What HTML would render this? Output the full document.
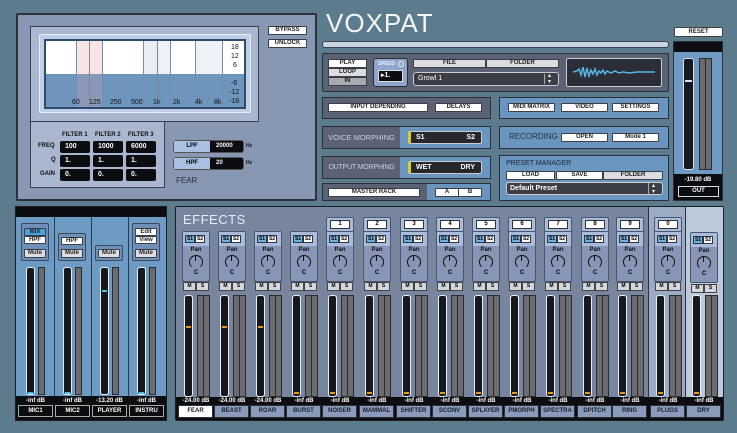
<!DOCTYPE html>
<html><head><meta charset="utf-8"><style>
*{box-sizing:border-box;margin:0;padding:0;white-space:nowrap}
body{width:737px;height:433px;background:#5c7b8d;position:relative;overflow:hidden;font-family:"Liberation Sans",sans-serif;}
.a{position:absolute}
.b{position:absolute;background:#fff;border:1px solid #3a3f4a;font-size:6px;font-weight:bold;color:#222;text-align:center;line-height:7px;border-radius:1px}
.g{background:#dcdde0}
.blk{position:absolute;background:#0c0d10;color:#fff;font-size:7px;font-weight:bold;line-height:11px;padding-left:5px;border-radius:2px}
.t{position:absolute;font-size:6px;font-weight:bold;color:#111}
.ch{position:absolute;top:207px;width:36px;height:213px}
.num{position:absolute;left:4px;top:10px;width:28px;height:22px;background:#a9bcdb;border:1px solid #4a5670;border-radius:2px}
.num i{position:absolute;left:3px;top:2px;width:20px;height:9px;background:#fff;border:1px solid #333;font-style:normal;font-size:6px;font-weight:bold;text-align:center;line-height:7px}
.grp{position:absolute;left:4px;top:24px;width:28px;height:51px;background:#8796b6;border:1px solid #4a5670;border-radius:2px}
.grp .ss{position:absolute;left:0;top:0;width:26px;height:14px;background:#a9bcdb}
.s1,.s2{position:absolute;top:3px;width:10px;height:8px;font-size:5px;font-weight:bold;text-align:center;line-height:7px;border:1px solid #334}
.s1{left:2px;background:#6eb0e0}.s2{left:12px;background:#fff}
.pan{position:absolute;left:0;top:15px;width:26px;text-align:center;font-size:6px;font-weight:bold;color:#111}
.kn{position:absolute;left:6px;top:23px;width:14px;height:14px;border:1.5px solid #111;border-radius:50%;border-bottom-color:transparent}
.kn:after{content:"";position:absolute;left:4.5px;top:-1px;width:1.5px;height:6px;background:#111}
.cc{position:absolute;left:0;top:38px;width:26px;text-align:center;font-size:6px;font-weight:bold}
.ms{position:absolute;top:75px;width:13px;height:9px;background:#d3d6dc;border:1px solid #444;font-size:5px;font-weight:bold;text-align:center;line-height:7px}
.fd{position:absolute;left:6px;top:88px;width:9px;height:102px;background:#15181c;border:1px solid #e8eef5;border-radius:3px}
.fd b{position:absolute;left:1px;width:5px;height:2px;background:#e89a1a}
.m{position:absolute;top:88px;width:7px;height:102px;background:#6a6c70;border:1px solid #2a2c30}
.db{position:absolute;top:191px;width:36px;text-align:center;font-size:6px;font-weight:bold;color:#fff}
.lb{position:absolute;top:198px;left:0;width:35px;height:13px;background:#8a9abb;border:1px solid #2a2f3a;font-size:6px;font-weight:bold;text-align:center;line-height:11px;color:#1a1f2a}
.mc{position:absolute;top:207px;width:37px;height:213px}
.mf{position:absolute;left:9px;top:60px;width:9px;height:128px;background:#15181c;border:1px solid #e8eef5;border-radius:3px}
.mf b{position:absolute;left:1px;width:5px;height:2px;background:#49c6e8}
.mm{position:absolute;left:21px;top:60px;width:7px;height:128px;background:#6a6c70;border:1px solid #2a2c30}
.ml{position:absolute;top:198px;left:1px;width:35px;height:12px;background:#0c0d10;border:1px solid #aaa;color:#fff;font-size:6px;font-weight:bold;text-align:center;line-height:10px}
.mdb{position:absolute;top:191px;width:37px;text-align:center;font-size:6px;font-weight:bold;color:#fff}
.mg{position:absolute;left:4px;width:28px;background:#6d8fb8;border:1px solid #3a4a60;border-radius:2px}
</style></head><body>

<div class="a" style="left:16px;top:13px;width:301px;height:188px;background:#8898b4;border:2px solid #2a303c;border-radius:2px"></div>
<div class="a" style="left:30px;top:26px;width:229px;height:96px;background:#a9b7d0;border:1px solid #3a4050"></div>
<div class="a" style="left:39px;top:34px;width:212px;height:79px;background:#c0cfe5;border:1px solid #e6eef8;border-radius:2px"></div>
<div class="a" style="left:44px;top:39px;width:202px;height:70px;background:#fff;border:2px solid #2d4b6e"></div>
<div class="a" style="left:46px;top:74px;width:198px;height:33px;background:#6e96bd"></div>
<div class="a" style="left:77px;top:41px;width:12px;height:33px;background:#f8e4e4"></div>
<div class="a" style="left:90px;top:41px;width:12px;height:33px;background:#f8e4e4"></div>
<div class="a" style="left:77px;top:74px;width:25px;height:33px;background:#8898b8"></div>
<div class="a" style="left:144px;top:41px;width:14px;height:33px;background:#e8edf6"></div>
<div class="a" style="left:158px;top:41px;width:12px;height:33px;background:#eef1f8"></div>
<div class="a" style="left:196px;top:41px;width:26px;height:33px;background:#eef1f8"></div>
<div class="a" style="left:76px;top:41px;width:1px;height:66px;background:#7a8ab8"></div>
<div class="a" style="left:89px;top:41px;width:1px;height:66px;background:#888"></div>
<div class="a" style="left:102px;top:41px;width:1px;height:66px;background:#7a8ab8"></div>
<div class="a" style="left:143px;top:41px;width:1px;height:66px;background:#7a8ab8"></div>
<div class="a" style="left:157px;top:41px;width:1px;height:66px;background:#888"></div>
<div class="a" style="left:170px;top:41px;width:1px;height:66px;background:#7a8ab8"></div>
<div class="a" style="left:195px;top:41px;width:1px;height:66px;background:#7a8ab8"></div>
<div class="a" style="left:222px;top:41px;width:1px;height:66px;background:#7a8ab8"></div>
<div class="t" style="left:72px;top:99px;font-weight:normal;font-size:7px">60</div>
<div class="t" style="left:89px;top:99px;font-weight:normal;font-size:7px">125</div>
<div class="t" style="left:110px;top:99px;font-weight:normal;font-size:7px">250</div>
<div class="t" style="left:131px;top:99px;font-weight:normal;font-size:7px">500</div>
<div class="t" style="left:153px;top:99px;font-weight:normal;font-size:7px">1k</div>
<div class="t" style="left:173px;top:99px;font-weight:normal;font-size:7px">2k</div>
<div class="t" style="left:195px;top:99px;font-weight:normal;font-size:7px">4k</div>
<div class="t" style="left:214px;top:99px;font-weight:normal;font-size:7px">8k</div>
<div class="t" style="left:231px;top:44px;font-weight:normal;font-size:7px">18</div>
<div class="t" style="left:231px;top:53px;font-weight:normal;font-size:7px">12</div>
<div class="t" style="left:233px;top:62px;font-weight:normal;font-size:7px">6</div>
<div class="t" style="left:231px;top:80px;font-weight:normal;font-size:7px">-6</div>
<div class="t" style="left:229px;top:89px;font-weight:normal;font-size:7px">-12</div>
<div class="t" style="left:229px;top:98px;font-weight:normal;font-size:7px">-18</div>

<div class="a" style="left:30px;top:121px;width:135px;height:67px;background:#a9b7d0;border:1px solid #3a4050"></div>
<div class="t" style="left:62px;top:132px">FILTER 1</div>
<div class="t" style="left:95px;top:132px">FILTER 2</div>
<div class="t" style="left:128px;top:132px">FILTER 3</div>
<div class="t" style="left:38px;top:143px">FREQ</div>
<div class="t" style="left:51px;top:157px">Q</div>
<div class="t" style="left:40px;top:171px">GAIN</div>
<div class="blk" style="left:60px;top:141px;width:30px;height:12px">100</div>
<div class="blk" style="left:93px;top:141px;width:30px;height:12px">1000</div>
<div class="blk" style="left:126px;top:141px;width:30px;height:12px">6000</div>
<div class="blk" style="left:60px;top:155px;width:30px;height:12px">1.</div>
<div class="blk" style="left:93px;top:155px;width:30px;height:12px">1.</div>
<div class="blk" style="left:126px;top:155px;width:30px;height:12px">1.</div>
<div class="blk" style="left:60px;top:169px;width:30px;height:12px">0.</div>
<div class="blk" style="left:93px;top:169px;width:30px;height:12px">0.</div>
<div class="blk" style="left:126px;top:169px;width:30px;height:12px">0.</div>

<div class="a" style="left:173px;top:140px;width:71px;height:13px;background:#0c0d10;border:1px solid #555;border-radius:3px"></div>
<div class="a" style="left:174px;top:141px;width:36px;height:11px;background:#a9c0e2;font-size:6px;font-weight:bold;text-align:center;line-height:11px">LPF</div>
<div class="t" style="left:216px;top:143px;color:#fff">20000</div>
<div class="t" style="left:246px;top:143px;font-size:5px">Hz</div>
<div class="a" style="left:173px;top:157px;width:71px;height:13px;background:#0c0d10;border:1px solid #555;border-radius:3px"></div>
<div class="a" style="left:174px;top:158px;width:36px;height:11px;background:#a9c0e2;font-size:6px;font-weight:bold;text-align:center;line-height:11px">HPF</div>
<div class="t" style="left:216px;top:160px;color:#fff">20</div>
<div class="t" style="left:246px;top:160px;font-size:5px">Hz</div>
<div class="a" style="left:176px;top:176px;font-size:8px;color:#2a3040">FEAR</div>

<div class="b" style="left:268px;top:26px;width:39px;height:9px">BYPASS</div>
<div class="b" style="left:268px;top:39px;width:39px;height:9px">UNLOCK</div>

<div class="a" style="left:326px;top:8px;font-size:26px;color:#f4f6f8;letter-spacing:1px;line-height:30px">VOXPAT</div>
<div class="a" style="left:322px;top:41px;width:347px;height:7px;background:#c8d3e2;border:1px solid #3a4050;border-radius:3px"></div>

<div class="a" style="left:322px;top:53px;width:347px;height:39px;background:#5b6274;border:1px solid #2a2f3a;border-radius:2px"></div>
<div class="b" style="left:328px;top:59px;width:39px;height:9px">PLAY</div>
<div class="b g" style="left:328px;top:68px;width:39px;height:9px">LOOP</div>
<div class="b" style="left:328px;top:77px;width:39px;height:9px;background:#a8aab0">IN</div>
<div class="a" style="left:373px;top:58px;width:35px;height:29px;background:#8ea6cc;border:1px solid #2a2f3a;border-radius:3px"></div>
<div class="t" style="left:378px;top:61px;font-size:5px;color:#e8eef8">SPEED</div>
<div class="a" style="left:398px;top:61px;width:6px;height:6px;border:1px solid #eee;border-radius:50%"></div>
<div class="a" style="left:378px;top:70px;width:25px;height:12px;background:#0c0d10;border:1px solid #ddd;color:#fff;font-size:7px;font-weight:bold;line-height:10px;padding-left:2px">▸1.</div>
<div class="b g" style="left:413px;top:59px;width:73px;height:9px">FILE</div>
<div class="b g" style="left:486px;top:59px;width:73px;height:9px">FOLDER</div>
<div class="a" style="left:413px;top:72px;width:146px;height:14px;background:#3b3e46;border:1px solid #ccc;border-radius:3px;color:#fff;font-size:7px;line-height:12px;padding-left:4px">Growl 1</div>
<div class="a" style="left:544px;top:74px;width:1px;height:10px;background:#aaa"></div>
<div class="a" style="left:548px;top:73px;color:#fff;font-size:6px;line-height:6px;white-space:normal">▴<br>▾</div>
<div class="a" style="left:566px;top:58px;width:96px;height:29px;background:#2b2e36;border:1px solid #c8ccd4;border-radius:2px"></div>
<svg class="a" style="left:567px;top:59px" width="94" height="27"><path d="M6 13 L10 12 L12 10 L14 16 L16 8 L18 18 L20 9 L22 17 L24 11 L26 15 L28 10 L30 16 L32 12 L34 14 L36 11 L38 15 L40 12 L44 14 L48 12 L52 14 L56 13 L62 14 L70 13 L80 13 L88 13" stroke="#5ab4e8" stroke-width="1.5" fill="none"/></svg>

<div class="a" style="left:322px;top:97px;width:169px;height:22px;background:#5b6274;border:1px solid #2a2f3a"></div>
<div class="b" style="left:328px;top:103px;width:100px;height:9px">INPUT DEPENDING</div>
<div class="b" style="left:435px;top:103px;width:47px;height:9px">DELAYS</div>
<div class="a" style="left:499px;top:97px;width:170px;height:22px;background:#6a95be;border:1px solid #2a2f3a"></div>
<div class="b" style="left:508px;top:103px;width:47px;height:9px">MIDI MATRIX</div>
<div class="b" style="left:561px;top:103px;width:47px;height:9px">VIDEO</div>
<div class="b" style="left:612px;top:103px;width:47px;height:9px">SETTINGS</div>

<div class="a" style="left:322px;top:126px;width:169px;height:23px;background:#6a95be;border:1px solid #2a2f3a"></div>
<div class="a" style="left:323px;top:127px;width:77px;height:21px;background:#5b6274;color:#c8cfdc;font-size:7.5px;line-height:21px;text-align:center">VOICE MORPHING</div>
<div class="a" style="left:408px;top:131px;width:74px;height:13px;background:#25272c;border:1px solid #c8ccd4;border-left:3px solid #d8d020;border-radius:2px;color:#fff;font-size:7px;font-weight:bold;line-height:11px"><span style="position:absolute;left:5px">S1</span><span style="position:absolute;right:6px">S2</span></div>
<div class="a" style="left:499px;top:126px;width:170px;height:23px;background:#6a95be;border:1px solid #2a2f3a"></div>
<div class="a" style="left:509px;top:132px;color:#2a3040;font-size:8px">RECORDING</div>
<div class="b" style="left:561px;top:133px;width:47px;height:9px">OPEN</div>
<div class="b" style="left:612px;top:133px;width:47px;height:9px">Mode 1</div>

<div class="a" style="left:322px;top:156px;width:169px;height:23px;background:#6a95be;border:1px solid #2a2f3a"></div>
<div class="a" style="left:323px;top:157px;width:77px;height:21px;background:#5b6274;color:#c8cfdc;font-size:7px;line-height:21px;text-align:center;letter-spacing:-0.2px">OUTPUT MORPHING</div>
<div class="a" style="left:408px;top:161px;width:74px;height:13px;background:#25272c;border:1px solid #c8ccd4;border-left:3px solid #d8d020;border-radius:2px;color:#fff;font-size:7px;font-weight:bold;line-height:11px"><span style="position:absolute;left:5px">WET</span><span style="position:absolute;right:6px">DRY</span></div>
<div class="a" style="left:499px;top:155px;width:170px;height:46px;background:#6a95be;border:1px solid #2a2f3a"></div>
<div class="a" style="left:506px;top:160px;color:#1f2838;font-size:7px">PRESET MANAGER</div>
<div class="b" style="left:506px;top:171px;width:49px;height:9px">LOAD</div>
<div class="b" style="left:556px;top:171px;width:47px;height:9px">SAVE</div>
<div class="b g" style="left:603px;top:171px;width:60px;height:9px">FOLDER</div>
<div class="a" style="left:506px;top:182px;width:157px;height:13px;background:#3b3e46;border:1px solid #ccc;border-radius:3px;color:#fff;font-size:7px;font-weight:bold;line-height:11px;padding-left:3px">Default Preset</div>
<div class="a" style="left:648px;top:183px;width:1px;height:11px;background:#aaa"></div>
<div class="a" style="left:652px;top:183px;color:#fff;font-size:6px;line-height:6px;white-space:normal">▴<br>▾</div>

<div class="a" style="left:322px;top:183px;width:169px;height:18px;background:#6a95be;border:1px solid #2a2f3a"></div>
<div class="a" style="left:323px;top:184px;width:104px;height:16px;background:#5b6274"></div>
<div class="b" style="left:328px;top:188px;width:92px;height:9px">MASTER RACK</div>
<div class="b" style="left:435px;top:188px;width:24px;height:9px">A</div>
<div class="b" style="left:458px;top:188px;width:24px;height:9px">B</div>

<div class="b" style="left:674px;top:27px;width:49px;height:10px;line-height:8px">RESET</div>
<div class="a" style="left:673px;top:41px;width:50px;height:160px;background:#0c0d10;border:1px solid #2a2f3a"></div>
<div class="a" style="left:674px;top:52px;width:48px;height:122px;background:#6e9ac4"></div>
<div class="a" style="left:683px;top:58px;width:11px;height:112px;background:#15181c;border:1px solid #d8e0ea;border-radius:3px"></div>
<div class="a" style="left:685px;top:80px;width:7px;height:2px;background:#dde"></div>
<div class="a" style="left:699px;top:58px;width:7px;height:112px;background:#6a6c70;border:1px solid #2a2c30"></div>
<div class="a" style="left:705px;top:58px;width:7px;height:112px;background:#6a6c70;border:1px solid #2a2c30"></div>
<div class="a" style="left:673px;top:177px;width:50px;text-align:center;color:#fff;font-size:6px;font-weight:bold">-19.80 dB</div>
<div class="a" style="left:678px;top:186px;width:41px;height:11px;border:1px solid #ddd;color:#fff;font-size:6px;font-weight:bold;text-align:center;line-height:9px">OUT</div>

<div class="a" style="left:15px;top:206px;width:152px;height:215px;background:#6e9bc4;border:1px solid #1a1d22"></div>
<div class="a" style="left:16px;top:207px;width:150px;height:10px;background:#0c0d10"></div>
<div class="a" style="left:16px;top:396px;width:150px;height:24px;background:#0c0d10"></div>
<div class="a" style="left:54px;top:217px;width:1px;height:180px;background:#2a3a50"></div>
<div class="a" style="left:91px;top:217px;width:1px;height:180px;background:#2a3a50"></div>
<div class="a" style="left:128px;top:217px;width:1px;height:180px;background:#2a3a50"></div>

<div class="mc" style="left:17px">
 <div class="mg" style="top:16px;height:38px"></div>
 <div class="b" style="left:7px;top:21px;width:22px;height:8px;background:#4aa0d8;line-height:6px">MIX</div>
 <div class="b" style="left:7px;top:29px;width:22px;height:8px;line-height:6px">HPF</div>
 <div class="b g" style="left:7px;top:42px;width:22px;height:9px">Mute</div>
 <div class="mf"><b style="top:124px"></b></div><div class="mm"></div>
 <div class="mdb">-inf dB</div><div class="ml">MIC1</div>
</div>
<div class="mc" style="left:54px">
 <div class="mg" style="top:26px;height:28px"></div>
 <div class="b" style="left:7px;top:30px;width:22px;height:8px;line-height:6px">HPF</div>
 <div class="b g" style="left:7px;top:42px;width:22px;height:9px">Mute</div>
 <div class="mf"><b style="top:124px"></b></div><div class="mm"></div>
 <div class="mdb">-inf dB</div><div class="ml">MIC2</div>
</div>
<div class="mc" style="left:91px">
 <div class="mg" style="top:38px;height:16px"></div>
 <div class="b g" style="left:7px;top:42px;width:22px;height:9px">Mute</div>
 <div class="mf"><b style="top:22px"></b></div><div class="mm"></div>
 <div class="mdb">-13.20 dB</div><div class="ml">PLAYER</div>
</div>
<div class="mc" style="left:128px">
 <div class="mg" style="top:16px;height:38px"></div>
 <div class="b" style="left:7px;top:21px;width:22px;height:8px;line-height:6px">Edit</div>
 <div class="b" style="left:7px;top:29px;width:22px;height:8px;line-height:6px">View</div>
 <div class="b g" style="left:7px;top:42px;width:22px;height:9px">Mute</div>
 <div class="mf"><b style="top:124px"></b></div><div class="mm"></div>
 <div class="mdb">-inf dB</div><div class="ml">INSTRU</div>
</div>

<div class="a" style="left:175px;top:206px;width:549px;height:215px;background:#77859f;border:1px solid #1a1d22;border-radius:2px"></div>
<div class="a" style="left:648px;top:207px;width:37px;height:190px;background:#9aabc3;border-left:1px solid #2a2f3a"></div>
<div class="a" style="left:685px;top:207px;width:38px;height:190px;background:#bccadc;border-left:1px solid #2a2f3a"></div>
<div class="a" style="left:176px;top:397px;width:547px;height:23px;background:#0c0d10"></div>
<div class="a" style="left:183px;top:212px;font-size:13px;color:#e6ecf4;letter-spacing:0.5px">EFFECTS</div>

<div class="ch" style="left:178px"><div class="grp"><div class="ss"><div class="s1">S1</div><div class="s2">S2</div></div><div class="pan">Pan</div><div class="kn"></div><div class="cc">C</div></div><div class="ms" style="left:5px">M</div><div class="ms" style="left:18px">S</div><div class="fd"><b style="top:30px"></b></div><div class="m" style="left:19px"></div><div class="m" style="left:25px"></div><div class="db">-24.00 dB</div><div class="lb" style="background:#fff">FEAR</div></div>
<div class="ch" style="left:214px"><div class="grp"><div class="ss"><div class="s1">S1</div><div class="s2">S2</div></div><div class="pan">Pan</div><div class="kn"></div><div class="cc">C</div></div><div class="ms" style="left:5px">M</div><div class="ms" style="left:18px">S</div><div class="fd"><b style="top:30px"></b></div><div class="m" style="left:19px"></div><div class="m" style="left:25px"></div><div class="db">-24.00 dB</div><div class="lb">BEAST</div></div>
<div class="ch" style="left:250px"><div class="grp"><div class="ss"><div class="s1">S1</div><div class="s2">S2</div></div><div class="pan">Pan</div><div class="kn"></div><div class="cc">C</div></div><div class="ms" style="left:5px">M</div><div class="ms" style="left:18px">S</div><div class="fd"><b style="top:30px"></b></div><div class="m" style="left:19px"></div><div class="m" style="left:25px"></div><div class="db">-24.00 dB</div><div class="lb">ROAR</div></div>
<div class="ch" style="left:286px"><div class="grp"><div class="ss"><div class="s1">S1</div><div class="s2">S2</div></div><div class="pan">Pan</div><div class="kn"></div><div class="cc">C</div></div><div class="ms" style="left:5px">M</div><div class="ms" style="left:18px">S</div><div class="fd"><b style="top:96px"></b></div><div class="m" style="left:19px"></div><div class="m" style="left:25px"></div><div class="db">-inf dB</div><div class="lb">BURST</div></div>
<div class="ch" style="left:322px"><div class="num"><i>1</i></div><div class="grp"><div class="ss"><div class="s1">S1</div><div class="s2">S2</div></div><div class="pan">Pan</div><div class="kn"></div><div class="cc">C</div></div><div class="ms" style="left:5px">M</div><div class="ms" style="left:18px">S</div><div class="fd"><b style="top:96px"></b></div><div class="m" style="left:19px"></div><div class="m" style="left:25px"></div><div class="db">-inf dB</div><div class="lb">NOISER</div></div>
<div class="ch" style="left:359px"><div class="num"><i>2</i></div><div class="grp"><div class="ss"><div class="s1">S1</div><div class="s2">S2</div></div><div class="pan">Pan</div><div class="kn"></div><div class="cc">C</div></div><div class="ms" style="left:5px">M</div><div class="ms" style="left:18px">S</div><div class="fd"><b style="top:96px"></b></div><div class="m" style="left:19px"></div><div class="m" style="left:25px"></div><div class="db">-inf dB</div><div class="lb">MAMMAL</div></div>
<div class="ch" style="left:396px"><div class="num"><i>3</i></div><div class="grp"><div class="ss"><div class="s1">S1</div><div class="s2">S2</div></div><div class="pan">Pan</div><div class="kn"></div><div class="cc">C</div></div><div class="ms" style="left:5px">M</div><div class="ms" style="left:18px">S</div><div class="fd"><b style="top:96px"></b></div><div class="m" style="left:19px"></div><div class="m" style="left:25px"></div><div class="db">-inf dB</div><div class="lb">SHIFTER</div></div>
<div class="ch" style="left:432px"><div class="num"><i>4</i></div><div class="grp"><div class="ss"><div class="s1">S1</div><div class="s2">S2</div></div><div class="pan">Pan</div><div class="kn"></div><div class="cc">C</div></div><div class="ms" style="left:5px">M</div><div class="ms" style="left:18px">S</div><div class="fd"><b style="top:96px"></b></div><div class="m" style="left:19px"></div><div class="m" style="left:25px"></div><div class="db">-inf dB</div><div class="lb">SCONV</div></div>
<div class="ch" style="left:468px"><div class="num"><i>5</i></div><div class="grp"><div class="ss"><div class="s1">S1</div><div class="s2">S2</div></div><div class="pan">Pan</div><div class="kn"></div><div class="cc">C</div></div><div class="ms" style="left:5px">M</div><div class="ms" style="left:18px">S</div><div class="fd"><b style="top:96px"></b></div><div class="m" style="left:19px"></div><div class="m" style="left:25px"></div><div class="db">-inf dB</div><div class="lb">SPLAYER</div></div>
<div class="ch" style="left:504px"><div class="num"><i>6</i></div><div class="grp"><div class="ss"><div class="s1">S1</div><div class="s2">S2</div></div><div class="pan">Pan</div><div class="kn"></div><div class="cc">C</div></div><div class="ms" style="left:5px">M</div><div class="ms" style="left:18px">S</div><div class="fd"><b style="top:96px"></b></div><div class="m" style="left:19px"></div><div class="m" style="left:25px"></div><div class="db">-inf dB</div><div class="lb">PMORPH</div></div>
<div class="ch" style="left:540px"><div class="num"><i>7</i></div><div class="grp"><div class="ss"><div class="s1">S1</div><div class="s2">S2</div></div><div class="pan">Pan</div><div class="kn"></div><div class="cc">C</div></div><div class="ms" style="left:5px">M</div><div class="ms" style="left:18px">S</div><div class="fd"><b style="top:96px"></b></div><div class="m" style="left:19px"></div><div class="m" style="left:25px"></div><div class="db">-inf dB</div><div class="lb">SPECTRA</div></div>
<div class="ch" style="left:577px"><div class="num"><i>8</i></div><div class="grp"><div class="ss"><div class="s1">S1</div><div class="s2">S2</div></div><div class="pan">Pan</div><div class="kn"></div><div class="cc">C</div></div><div class="ms" style="left:5px">M</div><div class="ms" style="left:18px">S</div><div class="fd"><b style="top:96px"></b></div><div class="m" style="left:19px"></div><div class="m" style="left:25px"></div><div class="db">-inf dB</div><div class="lb">DPITCH</div></div>
<div class="ch" style="left:612px"><div class="num"><i>9</i></div><div class="grp"><div class="ss"><div class="s1">S1</div><div class="s2">S2</div></div><div class="pan">Pan</div><div class="kn"></div><div class="cc">C</div></div><div class="ms" style="left:5px">M</div><div class="ms" style="left:18px">S</div><div class="fd"><b style="top:96px"></b></div><div class="m" style="left:19px"></div><div class="m" style="left:25px"></div><div class="db">-inf dB</div><div class="lb">RING</div></div>
<div class="ch" style="left:650px"><div class="num"><i>0</i></div><div class="grp"><div class="ss"><div class="s1">S1</div><div class="s2">S2</div></div><div class="pan">Pan</div><div class="kn"></div><div class="cc">C</div></div><div class="ms" style="left:5px">M</div><div class="ms" style="left:18px">S</div><div class="fd"><b style="top:96px"></b></div><div class="m" style="left:19px"></div><div class="m" style="left:25px"></div><div class="db">-inf dB</div><div class="lb">PLUGS</div></div>
<div class="ch" style="left:686px"><div class="grp" style="top:25px"><div class="ss"><div class="s1">S1</div><div class="s2">S2</div></div><div class="pan">Pan</div><div class="kn"></div><div class="cc">C</div></div><div class="ms" style="left:5px;top:77px">M</div><div class="ms" style="left:18px;top:77px">S</div><div class="fd"><b style="top:96px"></b></div><div class="m" style="left:19px"></div><div class="m" style="left:25px"></div><div class="db">-inf dB</div><div class="lb">DRY</div></div>

</body></html>
